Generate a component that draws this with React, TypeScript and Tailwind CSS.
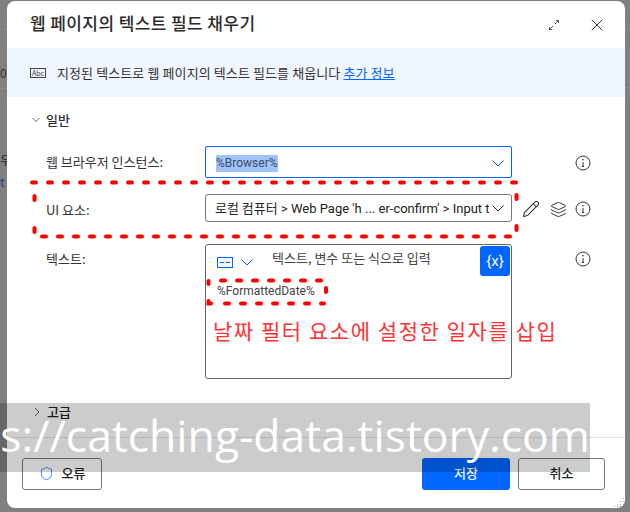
import { Layers, Pencil, Shield, X } from "lucide-react";

const font = { fontFamily: '"Noto Sans CJK KR", "Open Sans", sans-serif' };
const latin = { fontFamily: 'Roboto, sans-serif' };

const InfoIcon = () => (
  <svg width="16" height="16" viewBox="0 0 16 16" fill="none" stroke="#333" className="shrink-0">
    <circle cx="8" cy="8" r="7" />
    <path d="M8 7v4.500M7 11.500h2" strokeWidth="1" />
    <circle cx="8" cy="4.800" r=".8" fill="#333" stroke="none" />
  </svg>
);

const ExpandIcon = () => (
  <svg width="12" height="12" viewBox="0 0 12 12" fill="none" stroke="#555">
    <path d="M7 5l3.500-3.500M8 1.500h2.500V4M5 7l-3.500 3.500M4 10.500H1.500V8" />
  </svg>
);

const AbcIcon = () => (
  <div className="w-4 h-[10px] border border-[#444] text-[7px] leading-[8px] text-center text-[#333] shrink-0">Abc</div>
);

const Chevron = ({ className }: { className: string }) => (
  <svg width="12" height="7" viewBox="0 0 12 7" fill="none" stroke="currentColor" className={className}>
    <path d="M.5.500l5.500 5.500 5.500-5.500" />
  </svg>
);

const SmallChevron = ({ right }: { right?: boolean }) => (
  <svg width="8" height="8" viewBox="0 0 8 8" fill="none" stroke="#666" className="shrink-0">
    {right ? <path d="M2 0l4 4-4 4" /> : <path d="M.5 2l3.500 3.500L7.500 2" />}
  </svg>
);

const GripDots = () => (
  <svg width="11" height="11" viewBox="0 0 11 11" fill="#9aa7c4" className="absolute right-0 bottom-0">
    <rect x="9" y="1" width="1" height="1" />
    <rect x="6" y="4" width="1" height="1" />
    <rect x="9" y="4" width="1" height="1" />
    <rect x="3" y="7" width="1" height="1" />
    <rect x="6" y="7" width="1" height="1" />
    <rect x="9" y="7" width="1" height="1" />
    <rect x="0" y="9" width="1" height="1" />
    <rect x="3" y="9" width="1" height="1" />
    <rect x="6" y="9" width="1" height="1" />
    <rect x="9" y="9" width="1" height="1" />
  </svg>
);

// red hand-drawn highlight boxes from the blog author
const Highlights = () => (
  <svg width="630" height="512" className="absolute left-0 top-0 pointer-events-none" fill="none" stroke="#ff0000" strokeWidth="4" strokeLinecap="round">
    <path d="M32 182.500H516" strokeDasharray="4 12" />
    <path d="M42 236.500H510" strokeDasharray="4 12" />
    <path d="M34.500 196V200M34.500 228V232" />
    <path d="M516.500 195V199M516.500 226V230" />
    <path d="M221 280.500H322" strokeDasharray="4 12" />
    <path d="M225 303.500H324" strokeDasharray="4 12" />
    <path d="M326 288V292" />
    <path d="M208.500 281V284M208.500 301V303.500H211" />
  </svg>
);

const Label = ({ txt }: { txt: string }) => <p className="text-[13px] leading-4 text-[#333]">{txt}</p>;

export default function App() {
  return (
    <div className="relative w-[630px] h-[512px] overflow-hidden bg-[#808080]" style={font}>
      <div className="absolute left-0 top-[29px] w-[7px] h-[60px] border-y border-[#8a8a8a]" />
      <div className="absolute right-0 top-[29px] w-[5px] h-[59px] border-y border-[#8a8a8a]" />
      <div className="absolute left-0 top-[64px] text-[12px] text-[#333]">0</div>
      <div className="absolute left-0 top-[151px] text-[12px] text-[#222]">우</div>
      <div className="absolute left-0 top-[173px] text-[12px] text-[#1a3e78]">t</div>

      <div className="ml-[7px] mt-px w-[618px] h-[507px] bg-white rounded-lg flex flex-col overflow-hidden relative">
        <div className="h-[47px] flex items-center pl-[23px] pr-[18px] shrink-0">
          <h1 className="text-[17px] font-medium text-[#2b2b2b] tracking-[0.4px] grow -mt-[3px]">웹 페이지의 텍스트 필드 채우기</h1>
          <ExpandIcon />
          <X size={20} strokeWidth={1.2} className="ml-[27px] text-[#333]" />
        </div>

        <div className="h-[49px] bg-[#f0f6ff] flex items-center pl-[23px] gap-[11px] shrink-0">
          <AbcIcon />
          <p className="text-[13px] text-[#333] tracking-[0.1px]">
            지정된 텍스트로 웹 페이지의 텍스트 필드를 채웁니다{" "}
            <span className="text-[#0066ff] underline">추가 정보</span>
          </p>
        </div>

        <div className="pl-[25px] mt-[15px] flex items-center gap-[6px] text-[13px] font-medium text-[#333] h-[16px]">
          <SmallChevron />
          <span>일반</span>
        </div>

        <div className="pl-[39px] mt-[18px] grid grid-cols-[159px_307px_1fr] grow content-start">
          <div className="h-[32px] flex items-center"><Label txt="웹 브라우저 인스턴스:" /></div>
          <div className="h-[32px] border border-[#0066ff] rounded-[2px] flex items-center justify-between pl-[10px] pr-[7px] pt-[2px]">
            <span className="text-[12px] bg-[#9fc4fb] text-[#3b4a66] leading-[17px]" style={latin}>%Browser%</span>
            <Chevron className="text-[#1a5fb4]" />
          </div>
          <div className="h-[32px] flex items-center justify-end pr-[34px] pt-[2px]"><InfoIcon /></div>

          <div className="h-[28px] mt-[16px] flex items-center pt-[4px]"><Label txt="UI 요소:" /></div>
          <div className="h-[28px] mt-[16px] border border-[#777] rounded-[3px] flex items-center pl-[9px] pr-[7px] pt-[1px] overflow-hidden">
            <span className="text-[13px] text-[#222] whitespace-nowrap grow overflow-hidden">
              로컬 컴퓨터
              <span className="text-[13px]" style={latin}> &gt; Web Page 'h ... er-confirm' &gt; Input t</span>
            </span>
            <Chevron className="text-[#333] ml-[3px] shrink-0" />
          </div>
          <div className="h-[28px] mt-[16px] flex items-center pl-[10px] pr-[34px] pt-[2px]">
            <Pencil size={18} strokeWidth={1.4} className="text-[#333]" />
            <Layers size={17} strokeWidth={1.4} className="text-[#333] ml-[10px]" />
            <div className="ml-auto"><InfoIcon /></div>
          </div>

          <div className="mt-[22px] h-[135px] pt-[7px]"><Label txt="텍스트:" /></div>
          <div className="mt-[22px] h-[135px] border border-[#666] rounded-[3px] relative pl-[11px] pt-[5px]">
            <div className="flex items-center h-[16px]">
              <svg width="16" height="11" viewBox="0 0 16 11" fill="none" stroke="#0066ff" className="mt-[9px]">
                <rect x=".5" y=".5" width="15" height="10" />
                <path d="M3 5.500h4M9 5.500h4" />
              </svg>
              <Chevron className="text-[#0066ff] ml-[8px] mt-[9px]" />
              <span className="text-[13px] text-[#444] ml-[19px] -mt-[1px]">텍스트, 변수 또는 식으로 입력</span>
            </div>
            <p className="text-[12px] text-[#444] mt-[17px] leading-4" style={latin}>%FormattedDate%</p>
            <button className="absolute right-[1px] top-[1px] w-[30px] h-[30px] rounded-[3px] bg-[#0066ff] text-white text-[15px]" style={latin}>{"{x}"}</button>
          </div>
          <div className="mt-[29px] flex justify-end items-start pr-[34px]"><InfoIcon /></div>
        </div>

        <div className="pl-[26px] flex items-center gap-[6px] text-[13px] font-medium text-[#222] h-[24px] shrink-0 -mt-[2px]">
          <SmallChevron right />
          <span>고급</span>
        </div>

        <div className="mt-[13px] border-t border-[#e3e3e3] h-[71px] shrink-0 flex items-start pt-[20px] pl-[15px] pr-[20px]">
          <button className="w-[80px] h-[32px] border border-[#777] rounded-[3px] flex items-center justify-center gap-[8px] text-[13px] font-medium text-[#222] pb-[2px]">
            <Shield size={15} strokeWidth={1.2} className="text-[#0066ff]" />
            오류
          </button>
          <button className="ml-auto w-[88px] h-[32px] rounded-[3px] bg-[#0066ff] text-white text-[13px] font-medium pb-[2px]">저장</button>
          <button className="ml-[8px] w-[87px] h-[32px] border border-[#777] rounded-[3px] text-[13px] font-medium text-[#222] pb-[2px]">취소</button>
        </div>
        <GripDots />
      </div>

      <Highlights />

      <p className="absolute left-[213px] top-[316px] text-[21px] leading-[28px] text-[#ff3333] tracking-[1.55px] whitespace-nowrap">날짜 필터 요소에 설정한 일자를 삽입</p>

      <div className="absolute left-0 top-[403px] w-[590px] h-[69px] bg-black/20 overflow-hidden flex justify-end items-center">
        <span className="text-[44.500px] text-white whitespace-nowrap leading-none -mt-[4px]" style={{ fontFamily: '"Open Sans", sans-serif' }}>https://catching-data.tistory.com</span>
      </div>
    </div>
  );
}
